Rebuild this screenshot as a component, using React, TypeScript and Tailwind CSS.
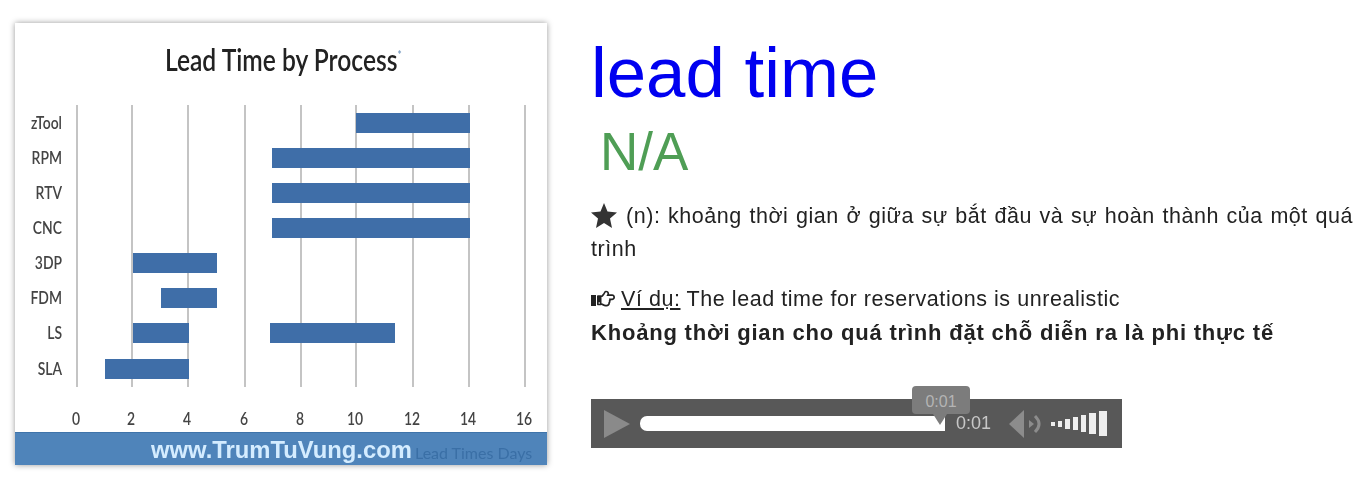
import { FaRegHandPointRight } from 'react-icons/fa';

const gridX = [77, 132, 188, 245, 301, 356, 413, 469, 525];
const ticks = [0, 2, 4, 6, 8, 10, 12, 14, 16];

const rows: { label: string; y: number; bars: [number, number][] }[] = [
  { label: 'zTool', y: 123, bars: [[356, 470]] },
  { label: 'RPM', y: 158, bars: [[272, 470]] },
  { label: 'RTV', y: 193, bars: [[272, 470]] },
  { label: 'CNC', y: 228, bars: [[272, 470]] },
  { label: '3DP', y: 263, bars: [[133, 217]] },
  { label: 'FDM', y: 298, bars: [[161, 217]] },
  { label: 'LS', y: 333, bars: [[133, 189], [270, 395]] },
  { label: 'SLA', y: 369, bars: [[105, 189]] },
];

const volumeBars = [
  { h: 'h-[4px]', w: 'w-[4px]' },
  { h: 'h-[6px]', w: 'w-[4px]' },
  { h: 'h-[10px]', w: 'w-[5px]' },
  { h: 'h-[13px]', w: 'w-[5px]' },
  { h: 'h-[17px]', w: 'w-[5px]' },
  { h: 'h-[21px]', w: 'w-[7px]' },
  { h: 'h-[25px]', w: 'w-[8px]' },
];

const ChartCard = () => (
  <div className="w-[532px] h-[442px] flex flex-col bg-white shadow-[0_0_6px_rgba(0,0,0,0.4)] blur-[0.5px]">
    <div className="h-[70px] pt-[17px] pl-[150px]">
      <div className="inline-block origin-left scale-x-[0.82] whitespace-nowrap text-[30px] leading-[38px] font-semibold text-[#222] font-['Lato',sans-serif]">
        Lead Time by Process
        <span className="relative -top-[12px] text-[12px] font-bold text-[#7a9cc0]">*</span>
      </div>
    </div>

    {/* biểu đồ */}
    <svg viewBox="15 93 532 339" className="w-[532px] h-[339px]">
      {gridX.map((x) => (
        <line key={x} x1={x} x2={x} y1={105} y2={387} stroke="#c4c4c4" strokeWidth={2} />
      ))}
      {rows.map((row) => (
        <g key={row.label}>
          <text
            transform={`translate(62 ${row.y + 6}) scale(0.82 1)`}
            textAnchor="end"
            fontSize={17}
            fontWeight={600}
            fill="#444"
            fontFamily="Lato, sans-serif"
          >
            {row.label}
          </text>
          {row.bars.map(([from, to]) => (
            <rect key={from} x={from} y={row.y - 10} width={to - from} height={20} fill="#3f6ea8" />
          ))}
        </g>
      ))}
      {ticks.map((tick, i) => (
        <text
          key={tick}
          transform={`translate(${gridX[i] - 1} 425) scale(0.82 1)`}
          textAnchor="middle"
          fontSize={17}
          fontWeight={600}
          fill="#444"
          fontFamily="Lato, sans-serif"
        >
          {tick}
        </text>
      ))}
    </svg>

    <div className="relative h-[33px] bg-[#4f84ba] border-t border-[#3f74aa]">
      <span className="absolute left-[136px] top-[3px] text-[23.8px] leading-[28px] font-bold text-[#d4ecff] font-['Liberation_Sans',sans-serif] whitespace-nowrap">
        www.TrumTuVung.com
      </span>
      <span className="absolute left-[400px] top-[8px] text-[16px] leading-[24px] text-[#3a6fa6] font-['Lato',sans-serif] whitespace-nowrap">
        Lead Times Days
      </span>
    </div>
  </div>
);

const AudioPlayer = () => (
  <div className="relative w-[531px] h-[49px] mt-[50px] bg-[#585858] flex items-center font-['Liberation_Sans',sans-serif]">
    <svg viewBox="0 0 28 30" className="w-[28px] h-[30px] ml-[12px]">
      <path d="M1 1 L27 15 L1 29 Z" fill="#8a8a8a" />
    </svg>
    <div className="w-[305px] h-[15px] ml-[9px] bg-white rounded-l-[7px]" />
    <span className="ml-[11px] text-[18px] text-[#c8c8c8]">0:01</span>

    {/* icône loa */}
    <svg viewBox="0 0 32 28" className="w-[32px] h-[28px] ml-[18px]">
      <path d="M0 14 L15 0 L15 28 Z" fill="#8c8c8c" />
      <path d="M20 10 L25 14 L20 18 Z" fill="#8c8c8c" />
      <path d="M26 6 Q34 14 26 22" fill="none" stroke="#8c8c8c" strokeWidth={3} />
    </svg>

    <div className="flex items-center gap-[3px] ml-[10px]">
      {volumeBars.map((bar, i) => (
        <div key={i} className={`${bar.h} ${bar.w} bg-[#eeeeee]`} />
      ))}
    </div>

    {/* tooltip thời gian */}
    <div className="absolute left-[321px] -top-[13px] w-[58px] h-[28px] rounded-[4px] bg-[#7c7c7c] text-center text-[16px] leading-[31px] text-[#b4b4b4]">
      0:01
      <div className="absolute left-[21px] top-[28px] w-0 h-0 border-l-[7px] border-r-[7px] border-t-[11px] border-l-transparent border-r-transparent border-t-[#7c7c7c]" />
    </div>
  </div>
);

export default function App() {
  return (
    <div className="w-[1364px] h-[490px] bg-white flex items-start overflow-hidden">
      <div className="ml-[15px] mt-[23px]">
        <ChartCard />
      </div>

      <div className="ml-[44px] w-[762px] blur-[0.4px] font-['Liberation_Sans',sans-serif] text-[#222]">
        <h1 className="text-[70.8px] leading-[80px] mt-[33px] text-[#0000f0]">lead time</h1>
        <p className="text-[53px] leading-[60px] ml-[9px] mt-[9px] text-[#4f9e55]">N/A</p>

        <p className="mt-[18px] text-[21.5px] tracking-[0.55px] leading-[33px] text-justify">
          <svg viewBox="0 0 26 25" className="inline-block w-[26px] h-[25px] mr-[9px] -mt-[4px]">
            <path d="M13 0 L16.5 8.5 L26 9.5 L19 15.5 L21 25 L13 20 L5 25 L7 15.5 L0 9.5 L9.5 8.5 Z" fill="#333" />
          </svg>
          (n): khoảng thời gian ở giữa sự bắt đầu và sự hoàn thành của một quá trình
        </p>

        <p className="mt-[17px] text-[21.5px] tracking-[0.55px] leading-[33px]">
          <span className="inline-block w-[5px] h-[11px] mr-[1px] bg-[#222]" />
          <FaRegHandPointRight className="inline-block w-[18px] h-[19px] mr-[6px] -mt-[3px] text-[#222]" />
          <u>Ví dụ:</u> The lead time for reservations is unrealistic
        </p>
        <p className="text-[22px] tracking-[0.8px] leading-[33px] font-bold whitespace-nowrap">
          Khoảng thời gian cho quá trình đặt chỗ diễn ra là phi thực tế
        </p>

        <AudioPlayer />
      </div>
    </div>
  );
}
